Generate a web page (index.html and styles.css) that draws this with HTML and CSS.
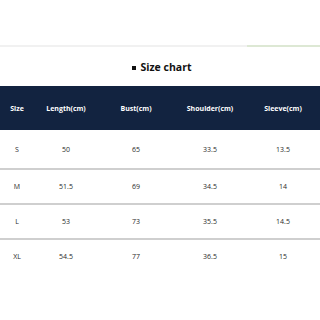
FILE: index.html
```html
<!DOCTYPE html>
<html>
<head>
<meta charset="utf-8">
<link rel="stylesheet" href="styles.css">
</head>
<body>
<div class="topline"><div class="grey"></div><div class="green"></div></div>
<div class="title"><span class="bullet"></span>Size chart</div>
<table class="chart">
  <colgroup>
    <col class="c1"><col class="c2"><col class="c3"><col class="c4"><col class="c5">
  </colgroup>
  <thead>
    <tr><th>Size</th><th>Length(cm)</th><th>Bust(cm)</th><th>Shoulder(cm)</th><th>Sleeve(cm)</th></tr>
  </thead>
  <tbody>
    <tr class="first"><td>S</td><td>50</td><td>65</td><td>33.5</td><td>13.5</td></tr>
    <tr><td>M</td><td>51.5</td><td>69</td><td>34.5</td><td>14</td></tr>
    <tr><td>L</td><td>53</td><td>73</td><td>35.5</td><td>14.5</td></tr>
    <tr class="last"><td>XL</td><td>54.5</td><td>77</td><td>36.5</td><td>15</td></tr>
  </tbody>
</table>
</body>
</html>
```
FILE: styles.css
```css
html, body {
  margin: 0;
  padding: 0;
  background: #ffffff;
  font-family: "Open Sans", "Noto Sans", sans-serif;
}
.topline {
  display: flex;
  margin-top: 45px;
  height: 2px;
}
.topline .grey {
  width: 247px;
  background: #f1f1f1;
}
.topline .green {
  flex: 1;
  background: #dde8d4;
}
.title {
  height: 39px;
  display: flex;
  align-items: center;
  justify-content: center;
  font-size: 10.5px;
  font-weight: 700;
  color: #111111;
  padding-left: 4px;
}
.bullet {
  width: 4px;
  height: 4px;
  background: #111111;
  margin-right: 4px;
  margin-top: 2px;
}
.chart {
  width: 320px;
  border-collapse: collapse;
  table-layout: fixed;
}
.c1 { width: 34px; }
.c2 { width: 64px; }
.c3 { width: 76px; }
.c4 { width: 72px; }
.c5 { width: 74px; }
.chart th {
  background: #122340;
  color: #ffffff;
  font-size: 7px;
  font-weight: 700;
  height: 44px;
  padding: 0;
  text-align: center;
}
.chart td {
  font-size: 7px;
  color: #2a2a2a;
  text-align: center;
  padding: 0;
  height: 33px;
  border-bottom: 2px solid #cfcfcf;
}
.chart tr.first td {
  height: 38px;
}
.chart tr.last td {
  border-bottom: none;
}
```
